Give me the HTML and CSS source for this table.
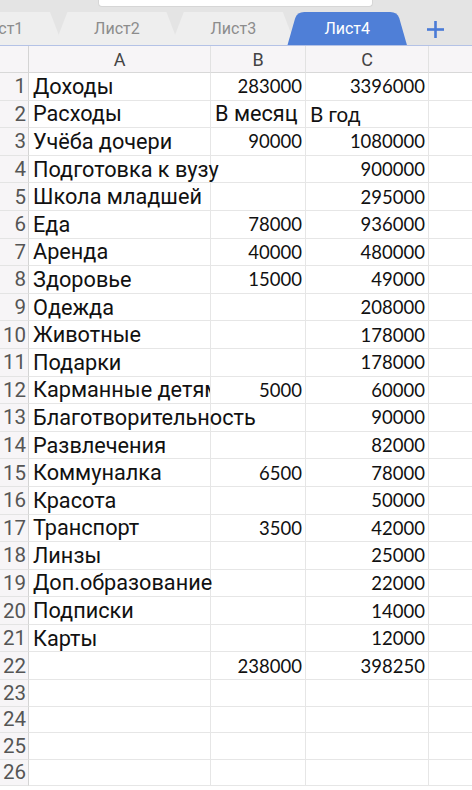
FILE: index.html
```html
<!DOCTYPE html>
<html lang="ru">
<head>
<meta charset="utf-8">
<link rel="stylesheet" href="styles.css">
</head>
<body>
<div class="topbar">
  <div class="search"></div>
  <div class="tabs">
    <div class="tab">Лист1</div>
    <div class="tab">Лист2</div>
    <div class="tab">Лист3</div>
    <div class="tab active">Лист4</div>
    <div class="add"><svg width="17" height="17" viewBox="0 0 17 17"><rect x="7.2" y="0" width="2.6" height="17" fill="#4a7bd6"/><rect x="0" y="7.2" width="17" height="2.6" fill="#4a7bd6"/></svg></div>
  </div>
</div>
<div class="sheet">
  <div class="h corner"></div><div class="h">A</div><div class="h">B</div><div class="h">C</div><div class="h">D</div>

  <div class="rn">1</div><div class="c">Доходы</div><div class="c n">283000</div><div class="c n">3396000</div><div class="c"></div>
  <div class="rn">2</div><div class="c">Расходы</div><div class="c">В месяц</div><div class="c l">В год</div><div class="c"></div>
  <div class="rn">3</div><div class="c">Учёба дочери</div><div class="c n">90000</div><div class="c n">1080000</div><div class="c"></div>
  <div class="rn">4</div><div class="c">Подготовка к вузу</div><div class="c"></div><div class="c n">900000</div><div class="c"></div>
  <div class="rn">5</div><div class="c">Школа младшей</div><div class="c"></div><div class="c n">295000</div><div class="c"></div>
  <div class="rn">6</div><div class="c">Еда</div><div class="c n">78000</div><div class="c n">936000</div><div class="c"></div>
  <div class="rn">7</div><div class="c">Аренда</div><div class="c n">40000</div><div class="c n">480000</div><div class="c"></div>
  <div class="rn">8</div><div class="c">Здоровье</div><div class="c n">15000</div><div class="c n">49000</div><div class="c"></div>
  <div class="rn">9</div><div class="c">Одежда</div><div class="c"></div><div class="c n">208000</div><div class="c"></div>
  <div class="rn">10</div><div class="c">Животные</div><div class="c"></div><div class="c n">178000</div><div class="c"></div>
  <div class="rn">11</div><div class="c">Подарки</div><div class="c"></div><div class="c n">178000</div><div class="c"></div>
  <div class="rn">12</div><div class="c clip">Карманные детям</div><div class="c n">5000</div><div class="c n">60000</div><div class="c"></div>
  <div class="rn">13</div><div class="c">Благотворительность</div><div class="c"></div><div class="c n">90000</div><div class="c"></div>
  <div class="rn">14</div><div class="c">Развлечения</div><div class="c"></div><div class="c n">82000</div><div class="c"></div>
  <div class="rn">15</div><div class="c">Коммуналка</div><div class="c n">6500</div><div class="c n">78000</div><div class="c"></div>
  <div class="rn">16</div><div class="c">Красота</div><div class="c"></div><div class="c n">50000</div><div class="c"></div>
  <div class="rn">17</div><div class="c">Транспорт</div><div class="c n">3500</div><div class="c n">42000</div><div class="c"></div>
  <div class="rn">18</div><div class="c">Линзы</div><div class="c"></div><div class="c n">25000</div><div class="c"></div>
  <div class="rn">19</div><div class="c">Доп.образование</div><div class="c"></div><div class="c n">22000</div><div class="c"></div>
  <div class="rn">20</div><div class="c">Подписки</div><div class="c"></div><div class="c n">14000</div><div class="c"></div>
  <div class="rn">21</div><div class="c">Карты</div><div class="c"></div><div class="c n">12000</div><div class="c"></div>
  <div class="rn">22</div><div class="c"></div><div class="c n">238000</div><div class="c n">398250</div><div class="c"></div>
  <div class="rn">23</div><div class="c"></div><div class="c"></div><div class="c"></div><div class="c"></div>
  <div class="rn">24</div><div class="c"></div><div class="c"></div><div class="c"></div><div class="c"></div>
  <div class="rn">25</div><div class="c"></div><div class="c"></div><div class="c"></div><div class="c"></div>
  <div class="rn">26</div><div class="c"></div><div class="c"></div><div class="c"></div><div class="c"></div>
</div>
</body>
</html>
```
FILE: styles.css
```css
* { box-sizing: border-box; }
html, body {
  margin: 0;
  padding: 0;
  width: 472px;
  height: 790px;
  overflow: hidden;
  background: #ffffff;
  font-family: Roboto, "Noto Sans", sans-serif;
}
.topbar {
  height: 46px;
  background: #e4e4e4;
  border-bottom: 1px solid #b4c2e6;
  overflow: hidden;
}
.search {
  margin-left: 98px;
  width: 275px;
  height: 7px;
  background: #ffffff;
  border: 1px solid #d6d6d6;
  border-top: none;
  border-radius: 0 0 4px 4px;
}
.tabs {
  display: flex;
  margin-top: 5px;
  height: 34px;
  margin-left: -62px;
}
.tab {
  flex: none;
  width: 125px;
  height: 34px;
  margin-right: -8.6px;
  background: #eeeeee;
  clip-path: polygon(13px 0, 112px 0, 125px 100%, 0 100%);
  color: #8c8c8c;
  font-size: 16px;
  line-height: 34px;
  text-align: center;
}
.tab.active {
  width: 120px;
  background: #4f7fd7;
  color: #ffffff;
  clip-path: path('M0 34 L8 6 Q10 0 17 0 L103 0 Q110 0 112 6 L120 34 Z');
}
.add {
  flex: none;
  margin-left: 28px;
  padding-top: 9px;
}
.add svg { display: block; }
.sheet {
  display: grid;
  grid-template-columns: 29px 182px 95px 123px 98px;
  grid-template-rows: 27px repeat(22, 27.6px) repeat(4, 26.5px);
  width: 527px;
}
.h {
  background: #f7f5f7;
  border-right: 1px solid #e2e2e2;
  border-bottom: 1px solid #d8d8d8;
  color: #444444;
  font-size: 18px;
  display: flex;
  align-items: center;
  justify-content: center;
}
.h.corner { border-right: 1px solid #d4d4d4; }
.rn {
  background: #f7f5f7;
  border-right: 1px solid #d4d4d4;
  border-bottom: 1px solid #e4e4e4;
  color: #555555;
  font-size: 20.5px;
  display: flex;
  align-items: center;
  justify-content: flex-end;
  padding-right: 2px;
}
.c {
  border-right: 1px solid #e6e6e6;
  border-bottom: 1px solid #e6e6e6;
  display: flex;
  align-items: center;
  padding: 0 4px;
  white-space: nowrap;
  color: #111111;
  font-size: 21.7px;
  min-width: 0;
}
.c.clip { overflow: hidden; }
.c.n {
  justify-content: flex-end;
  font-family: Lato, "Noto Sans", sans-serif;
  font-size: 18.5px;
  padding-right: 3px;
}
.c.l {
  font-family: Lato, "Noto Sans", sans-serif;
  font-size: 20.5px;
}
```
